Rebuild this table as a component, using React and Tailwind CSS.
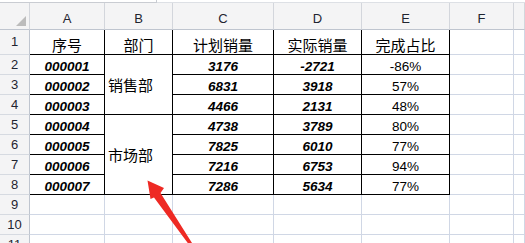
import React from 'react';

const cols = ['A', 'B', 'C', 'D', 'E', 'F', ''];
const headers = ['序号', '部门', '计划销量', '实际销量', '完成占比'];
const rows = [
  { id: '000001', plan: '3176', actual: '-2721', pct: '-86%' },
  { id: '000002', plan: '6831', actual: '3918', pct: '57%' },
  { id: '000003', plan: '4466', actual: '2131', pct: '48%' },
  { id: '000004', plan: '4738', actual: '3789', pct: '80%' },
  { id: '000005', plan: '7825', actual: '6010', pct: '77%' },
  { id: '000006', plan: '7216', actual: '6753', pct: '94%' },
  { id: '000007', plan: '7286', actual: '5634', pct: '77%' },
];

const num = "font-['Liberation_Sans',Arial,sans-serif]";
const cjk = "font-['Noto_Sans_CJK_SC',sans-serif]";
const tbl = 'border-r border-b border-black bg-white';
const grid = 'border-r border-b border-[#d0d7e5] bg-white';
const rowHdr = `border-r border-b border-r-[#bfc5cf] border-b-[#d6dae1] bg-[#f4f4f5] flex items-center justify-center text-[13px] text-[#1f2430] ${num}`;
const val = `${tbl} flex items-end justify-center text-[13.5px] leading-[15px] text-black ${num}`;

const App = () => {
  return (
    <div className="relative w-[525px] h-[243px] overflow-hidden bg-white">
      {/* formula bar edge */}
      <div className="flex h-[3px] bg-[#f4f4f5]">
        <div className="w-[157px] h-[3px] bg-white border-b border-r border-[#c9ccd2]" />
        <div className="flex-1 h-[3px] bg-white border-b border-[#dde0e5]" />
      </div>

      <div className="grid grid-cols-[30px_75px_68px_101px_88px_88px_64px_1fr] grid-rows-[27px_25px_repeat(10,20px)]">
        {/* column headers */}
        <div className="relative border-r border-b border-r-[#d3d6dc] border-b-[#bfc5cf] bg-[#f4f4f5]">
          <div className="absolute right-[3px] bottom-[3px] w-0 h-0 border-r-[10px] border-t-[10px] border-r-[#bcbcbc] border-t-transparent" />
        </div>
        {cols.map((c, i) => (
          <div
            key={'h' + i}
            className={`border-r border-b border-r-[#d3d6dc] border-b-[#bfc5cf] bg-[#f4f4f5] flex items-end justify-center pb-[3px] text-[13px] leading-[15px] text-[#1f2430] ${num}`}
          >
            {c}
          </div>
        ))}

        {/* row 1 */}
        <div className={rowHdr}>1</div>
        {headers.map((h) => (
          <div key={h} className={`${tbl} flex items-end justify-center text-[15px] leading-[18px] text-black ${cjk}`}>
            {h}
          </div>
        ))}
        <div className={grid} />
        <div className={grid} />

        {/* rows 2-8 */}
        {rows.map((r, i) => (
          <React.Fragment key={r.id}>
            <div className={rowHdr}>{i + 2}</div>
            <div className={`${val} font-bold italic`}>{r.id}</div>
            {i === 0 && (
              <div className={`${tbl} row-span-3 flex items-center pl-[3px] pt-[2px] text-[15px] text-black ${cjk}`}>销售部</div>
            )}
            {i === 3 && (
              <div className={`${tbl} row-span-4 flex items-center pl-[3px] pt-[2px] text-[15px] text-black ${cjk}`}>市场部</div>
            )}
            <div className={`${val} font-bold italic`}>{r.plan}</div>
            <div className={`${val} font-bold italic`}>{r.actual}</div>
            <div className={val}>{r.pct}</div>
            <div className={grid} />
            <div className={grid} />
          </React.Fragment>
        ))}

        {/* empty rows 9-11 */}
        {[9, 10, 11].map((n) => (
          <React.Fragment key={n}>
            <div className={rowHdr}>{n}</div>
            {cols.map((c, i) => (
              <div key={n + '-' + i} className={grid} />
            ))}
          </React.Fragment>
        ))}
      </div>

      {/* red arrow annotation */}
      <svg className="absolute left-0 top-0 pointer-events-none" width="525" height="243" viewBox="0 0 525 243">
        <polygon
          points="147.5,180.5 164,188 160.5,193 192,243 188.5,244 154,197.5 150.5,199"
          fill="#ee2a24"
        />
      </svg>
    </div>
  );
};

export default App;
